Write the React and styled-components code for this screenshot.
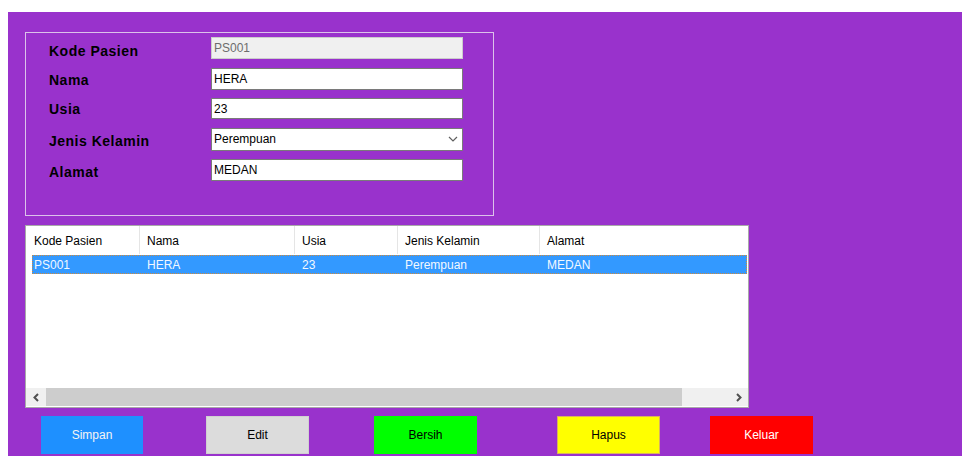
import React from "react";
import styled, { createGlobalStyle } from "styled-components";

const GlobalStyle = createGlobalStyle`
  html, body {
    margin: 0;
    padding: 0;
    background: #ffffff;
    font-family: "Liberation Sans", Arial, sans-serif;
  }
  * { box-sizing: border-box; }
`;

const Page = styled.div`
  padding: 12px 0 1px 8px;
`;

const FormPanel = styled.div`
  width: 954px;
  height: 444px;
  background: #9932cc;
  padding: 20px 0 0 17px;
  display: flex;
  flex-direction: column;
`;

const GroupBox = styled.fieldset`
  margin: 0;
  width: 469px;
  height: 184px;
  border: 1px solid #dcc2ea;
  padding: 4px 0 0 23px;
  display: grid;
  grid-template-columns: 162px 252px;
  grid-template-rows: 22px 22px 21px 23px 22px;
  row-gap: 8.5px;
  align-content: start;
`;

const FieldLabel = styled.label`
  font-size: 14px;
  font-weight: 700;
  letter-spacing: 0.5px;
  color: #000;
  display: flex;
  align-items: center;
  padding-top: ${(p) => p.$nudge ?? 3}px;
`;

const TextField = styled.input`
  height: 100%;
  width: 252px;
  margin: 0;
  border: 1px solid ${(p) => (p.$locked ? "#cccccc" : "#7a7a7a")};
  background: ${(p) => (p.$locked ? "#f0f0f0" : "#ffffff")};
  color: ${(p) => (p.$locked ? "#6d6d6d" : "#000000")};
  font-family: "Liberation Sans", Arial, sans-serif;
  font-size: 12px;
  padding: 0 2px;
  outline: none;
`;

const ComboBox = styled.div`
  height: 100%;
  width: 252px;
  border: 1px solid #7a7a7a;
  background: #ffffff;
  font-size: 12px;
  color: #000;
  display: flex;
  align-items: center;
  justify-content: space-between;
  padding: 0 4px 0 2px;
`;

const ListView = styled.div`
  margin-top: 9px;
  width: 724px;
  height: 183px;
  background: #ffffff;
  border: 1px solid #a9a9a9;
  display: flex;
  flex-direction: column;
`;

const HeaderRow = styled.div`
  display: grid;
  grid-template-columns: 114px 155px 103px 142px 1fr;
  height: 28px;
`;

const HeaderCell = styled.div`
  font-size: 12px;
  color: #000;
  display: flex;
  align-items: center;
  padding: 2px 0 0 ${(p) => (p.$first ? 8 : 7)}px;
  border-right: ${(p) => (p.$last ? "none" : "1px solid #e5e5e5")};
`;

const DataRow = styled.div`
  display: grid;
  grid-template-columns: 108px 155px 103px 142px 1fr;
  height: 19px;
  margin: 1px 1px 0 6px;
  background: ${(p) => (p.$selected ? "#3399ff" : "transparent")};
  outline: ${(p) => (p.$selected ? "1px dotted #d08a3a" : "none")};
  outline-offset: -1px;
`;

const DataCell = styled.div`
  font-size: 12px;
  color: #f2f8ff;
  display: flex;
  align-items: center;
  padding-left: ${(p) => (p.$first ? 2 : 7)}px;
`;

const ListSpace = styled.div`
  flex: 1;
`;

const HScroll = styled.div`
  height: 18px;
  margin-bottom: 1px;
  display: flex;
  background: #f0f0f0;
`;

const ScrollArrow = styled.div`
  width: ${(p) => p.$w}px;
  display: flex;
  align-items: center;
  justify-content: center;
`;

const ScrollThumb = styled.div`
  width: 636px;
  background: #cdcdcd;
`;

const ScrollTrack = styled.div`
  flex: 1;
`;

const ButtonBar = styled.div`
  display: flex;
  margin-top: 8px;
`;

const ActionButton = styled.button`
  margin: 0 0 0 ${(p) => p.$offset}px;
  width: ${(p) => p.$w}px;
  height: 38px;
  background: ${(p) => p.$bg};
  color: ${(p) => p.$fg};
  border: 1px solid ${(p) => p.$edge};
  font-family: "Liberation Sans", Arial, sans-serif;
  font-size: 12px;
  padding: 0;
  cursor: pointer;
`;

const Chevron = ({ dir }) => {
  const pts = {
    down: "1,1 5,5 9,1",
    left: "5,1 1.5,4.5 5,8",
    right: "1,1 4.5,4.5 1,8",
  }[dir];
  const down = dir === "down";
  return (
    <svg width={down ? 10 : 6} height={down ? 6 : 9} viewBox={down ? "0 0 10 6" : "0 0 6 9"}>
      <polyline
        points={pts}
        fill="none"
        stroke={down ? "#606060" : "#505050"}
        strokeWidth={down ? 1.2 : 2}
      />
    </svg>
  );
};

const columns = ["Kode Pasien", "Nama", "Usia", "Jenis Kelamin", "Alamat"];
const rows = [["PS001", "HERA", "23", "Perempuan", "MEDAN"]];

const buttons = [
  { label: "Simpan", offset: 16, w: 102, bg: "#1e90ff", fg: "#f4f4f4", edge: "#1e90ff" },
  { label: "Edit", offset: 63, w: 103, bg: "#dcdcdc", fg: "#000000", edge: "#d0d0d0" },
  { label: "Bersih", offset: 65, w: 103, bg: "#00ff00", fg: "#000000", edge: "#00ff00" },
  { label: "Hapus", offset: 80, w: 103, bg: "#ffff00", fg: "#000000", edge: "#d8b060" },
  { label: "Keluar", offset: 50, w: 103, bg: "#ff0000", fg: "#ffffff", edge: "#ff0000" },
];

export default function App() {
  return (
    <Page>
      <GlobalStyle />
      <FormPanel>
        <GroupBox>
          <FieldLabel $nudge={5}>Kode Pasien</FieldLabel>
          <TextField readOnly $locked value="PS001" />
          <FieldLabel>Nama</FieldLabel>
          <TextField readOnly value="HERA" />
          <FieldLabel $nudge={1}>Usia</FieldLabel>
          <TextField readOnly value="23" />
          <FieldLabel>Jenis Kelamin</FieldLabel>
          <ComboBox>
            <span>Perempuan</span>
            <Chevron dir="down" />
          </ComboBox>
          <FieldLabel>Alamat</FieldLabel>
          <TextField readOnly value="MEDAN" />
        </GroupBox>

        <ListView>
          <HeaderRow>
            {columns.map((c, i) => (
              <HeaderCell key={c} $first={i === 0} $last={i === columns.length - 1}>
                {c}
              </HeaderCell>
            ))}
          </HeaderRow>
          {rows.map((r) => (
            <DataRow key={r[0]} $selected>
              {r.map((v, i) => (
                <DataCell key={i} $first={i === 0}>
                  {v}
                </DataCell>
              ))}
            </DataRow>
          ))}
          <ListSpace />
          <HScroll>
            <ScrollArrow $w={20}>
              <Chevron dir="left" />
            </ScrollArrow>
            <ScrollThumb />
            <ScrollTrack />
            <ScrollArrow $w={18}>
              <Chevron dir="right" />
            </ScrollArrow>
          </HScroll>
        </ListView>

        <ButtonBar>
          {buttons.map((b) => (
            <ActionButton
              key={b.label}
              $offset={b.offset}
              $w={b.w}
              $bg={b.bg}
              $fg={b.fg}
              $edge={b.edge}
            >
              {b.label}
            </ActionButton>
          ))}
        </ButtonBar>
      </FormPanel>
    </Page>
  );
}
